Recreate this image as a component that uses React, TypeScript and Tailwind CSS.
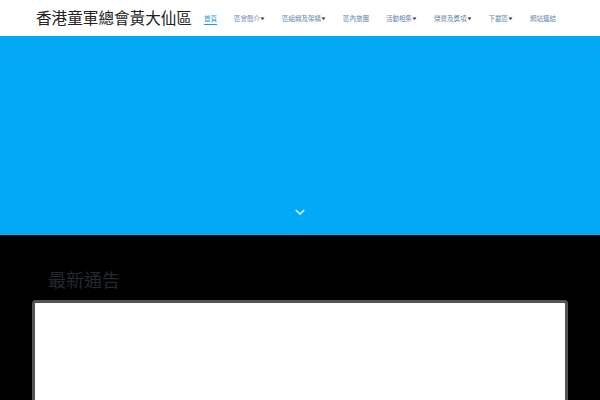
const nav = [
  { label: '首頁', active: true },
  { label: '區會簡介', caret: true },
  { label: '區組織及架構', caret: true },
  { label: '區內旅團' },
  { label: '活動相集', caret: true },
  { label: '榮譽及獎項', caret: true },
  { label: '下載區', caret: true },
  { label: '網站連結' },
];

const cjk = { fontFamily: '"Noto Sans CJK TC", "Noto Sans", sans-serif' };

export default function App() {
  return (
    <div className="flex h-[400px] w-[600px] flex-col overflow-hidden bg-black" style={cjk}>
      <header className="flex h-[36px] shrink-0 items-center bg-white pl-[36px] pr-[44px]">
        <h1 className="shrink-0 whitespace-nowrap text-[15.6px] leading-none text-[#222]">香港童軍總會黃大仙區</h1>
        <nav className="ml-auto flex shrink-0 items-center gap-[17px]">
          {nav.map((n) => (
            <a
              key={n.label}
              className={
                'flex shrink-0 items-center whitespace-nowrap text-[6.5px] leading-none ' +
                (n.active
                  ? 'border-b-[1.5px] border-[#1e9be0] pb-[2px] pt-[3.5px] text-[#1e9be0]'
                  : 'text-[#5f86a8]')
              }
            >
              {n.label}
              {n.caret && (
                <svg viewBox="0 0 10 10" className="h-[5px] w-[5px]" fill="#333">
                  <path d="M1 3h8L5 8z" />
                </svg>
              )}
            </a>
          ))}
        </nav>
      </header>

      <section className="flex h-[199px] shrink-0 items-end justify-center bg-[#03a9f4] pb-[19px]">
        <svg viewBox="0 0 12 8" className="h-[7px] w-[10px]" fill="none" stroke="#d6f1ff" strokeWidth="2">
          <path d="M1 1l5 5 5-5" />
        </svg>
      </section>

      <section className="flex flex-1 flex-col px-[32px] pt-[35px]">
        <h2 className="pl-[16px] text-[18px] leading-none text-[#25292d]">最新通告</h2>
        <div className="mt-[12px] flex-1 rounded-t-[4px] border-[3px] border-b-0 border-[#555] bg-white" />
      </section>
    </div>
  );
}
